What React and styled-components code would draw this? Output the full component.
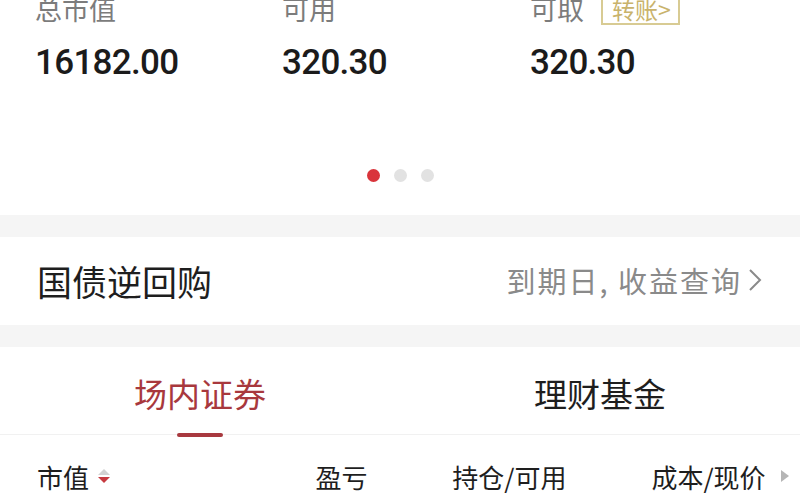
import React from "react";
import styled, { createGlobalStyle } from "styled-components";

const Global = createGlobalStyle`
  html, body { margin: 0; padding: 0; background: #fff; overflow: hidden; }
  body { font-family: "Noto Sans CJK SC", "Noto Sans", sans-serif; }
`;

const Page = styled.div`
  width: 800px;
  height: 500px;
  overflow: hidden;
  background: #fff;
`;

const Summary = styled.section`
  height: 222px;
  margin-top: -7px;
  display: flex;
  flex-direction: column;
`;

const Stats = styled.div`
  display: grid;
  grid-template-columns: 247px 248px 1fr;
  padding-left: 35px;
`;

const Stat = styled.div`
  display: flex;
  flex-direction: column;
  gap: 18px;
`;

const LabelRow = styled.div`
  display: flex;
  align-items: center;
  height: 32px;
`;

const Label = styled.span`
  font-size: 27px;
  line-height: 32px;
  color: #7c7c7c;
`;

const TransferBtn = styled.span`
  margin-left: 17px;
  display: inline-flex;
  align-items: center;
  height: 28px;
  padding: 0 7px 0 9px;
  border: 2px solid #d8cb93;
  color: #c9b36c;
  font-size: 23px;
  line-height: 28px;
  margin-top: -1px;
`;

const Value = styled.span`
  font-family: Roboto, "Liberation Sans", sans-serif;
  font-weight: 500;
  font-size: 35px;
  letter-spacing: -0.7px;
  line-height: 40px;
  color: #1b1b1b;
`;

const Dots = styled.div`
  margin-top: 86px;
  display: flex;
  justify-content: center;
  gap: 14px;
`;

const Dot = styled.span`
  width: 13px;
  height: 13px;
  border-radius: 50%;
  background: ${(p) => (p.$active ? "#d9343b" : "#e2e2e2")};
`;

const Gap = styled.div`
  height: 22px;
  background: #f5f5f5;
`;

const LinkRow = styled.div`
  height: 88px;
  display: flex;
  align-items: center;
  justify-content: space-between;
  padding: 0 38px 0 37px;
`;

const RowTitle = styled.span`
  font-size: 35px;
  color: #1e1e1e;
  margin-top: -2px;
`;

const RowHint = styled.span`
  display: flex;
  align-items: center;
  gap: 6px;
  font-size: 29px;
  letter-spacing: 2px;
  color: #8a8a8a;
  margin-top: -2px;
`;

const Tabs = styled.div`
  display: grid;
  grid-template-columns: 1fr 1fr;
  height: 87px;
  border-bottom: 1px solid #f1f1f1;
`;

const Tab = styled.div`
  position: relative;
  display: flex;
  align-items: center;
  justify-content: center;
  font-size: 33px;
  color: ${(p) => (p.$active ? "#a8383d" : "#1e1e1e")};
  padding-top: 4px;
  &::after {
    content: "";
    display: ${(p) => (p.$active ? "block" : "none")};
    position: absolute;
    left: 50%;
    bottom: -3px;
    width: 46px;
    height: 4px;
    margin-left: -23px;
    border-radius: 2px;
    background: #a8393f;
  }
`;

const Header = styled.div`
  display: flex;
  align-items: center;
  height: 82px;
  padding-left: 37px;
  font-size: 26px;
  color: #1e1e1e;
`;

const HeadCell = styled.div`
  width: ${(p) => p.$w}px;
  display: flex;
  align-items: center;
  gap: ${(p) => p.$gap || 8}px;
`;

const SortIcon = () => (
  <svg width="14" height="16" viewBox="0 0 14 16">
    <path d="M7 1 L13 7 L1 7 Z" fill="#d2d2d2" />
    <path d="M1 9 L13 9 L7 15 Z" fill="#c73a40" />
  </svg>
);

const Chevron = () => (
  <svg width="14" height="24" viewBox="0 0 14 24">
    <path d="M2 2 L12 12 L2 22" fill="none" stroke="#8a8a8a" strokeWidth="2" />
  </svg>
);

const SmallArrow = () => (
  <svg width="10" height="14" viewBox="0 0 10 14">
    <path d="M1 1 L9 7 L1 13 Z" fill="#b5b5b5" />
  </svg>
);

const stats = [
  { label: "总市值", value: "16182.00" },
  { label: "可用", value: "320.30" },
  { label: "可取", value: "320.30", transfer: true },
];

export default function App() {
  return (
    <Page>
      <Global />
      <Summary>
        <Stats>
          {stats.map((s) => (
            <Stat key={s.label}>
              <LabelRow>
                <Label>{s.label}</Label>
                {s.transfer && <TransferBtn>转账&gt;</TransferBtn>}
              </LabelRow>
              <Value>{s.value}</Value>
            </Stat>
          ))}
        </Stats>
        <Dots>
          <Dot $active />
          <Dot />
          <Dot />
        </Dots>
      </Summary>
      <Gap />
      <LinkRow>
        <RowTitle>国债逆回购</RowTitle>
        <RowHint>
          到期日, 收益查询
          <Chevron />
        </RowHint>
      </LinkRow>
      <Gap />
      <Tabs>
        <Tab $active>场内证券</Tab>
        <Tab>理财基金</Tab>
      </Tabs>
      <Header>
        <HeadCell $w={281}>
          市值
          <SortIcon />
        </HeadCell>
        <HeadCell $w={138}>盈亏</HeadCell>
        <HeadCell $w={201}>持仓/可用</HeadCell>
        <HeadCell $w={150} $gap={14}>
          成本/现价
          <SmallArrow />
        </HeadCell>
      </Header>
    </Page>
  );
}
